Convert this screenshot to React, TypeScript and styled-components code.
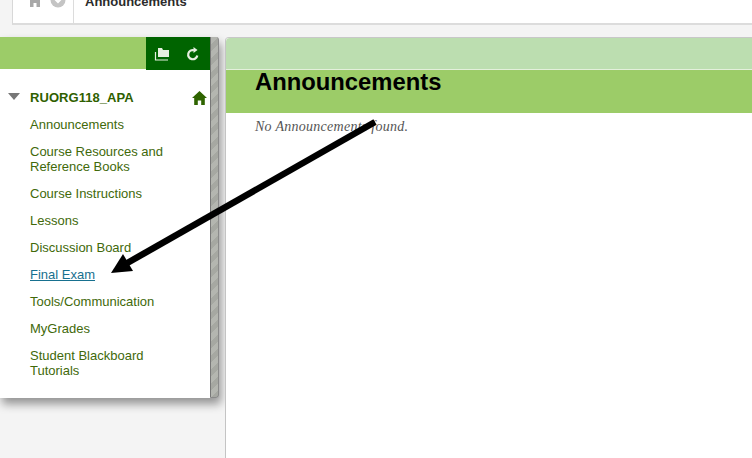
import React from "react";
import styled, { createGlobalStyle } from "styled-components";

const GlobalStyle = createGlobalStyle`
  html, body {
    margin: 0;
    padding: 0;
    background: #f4f4f4;
    overflow: hidden;
  }
`;

const Page = styled.div`
  position: relative;
  width: 752px;
  height: 458px;
  overflow: hidden;
  background: #f4f4f4;
  font-family: "Liberation Sans", Arial, sans-serif;
`;

const TopBar = styled.div`
  display: flex;
  align-items: flex-end;
  height: 23px;
  margin-left: 12px;
  background: #fff;
  border-left: 1px solid #d8d8d8;
  border-bottom: 2px solid #dcdcdc;
`;

const Crumbs = styled.div`
  display: flex;
  align-items: flex-start;
  gap: 7px;
  width: 61px;
  height: 100%;
  padding-left: 14px;
  box-sizing: border-box;
  border-right: 1px solid #dcdcdc;
  overflow: hidden;
`;

const CrumbIcon = styled.svg`
  flex: none;
  width: 16px;
  height: 16px;
  margin-top: -8px;
`;

const CrumbTitle = styled.div`
  align-self: flex-start;
  margin: -6px 0 0 11px;
  font-size: 13px;
  line-height: 15px;
  font-weight: bold;
  color: #2b2b2b;
`;

const Body = styled.div`
  display: flex;
  align-items: flex-start;
  gap: 6px;
  margin-top: 12px;
`;

const Sidebar = styled.aside`
  display: flex;
  width: 219px;
  height: 361px;
  box-shadow: 2px 6px 10px rgba(0, 0, 0, 0.4);
  border-radius: 0 3px 3px 0;
`;

const SidebarInner = styled.div`
  flex: 1;
  display: flex;
  flex-direction: column;
  background: #fff;
`;

const SidebarHead = styled.div`
  display: flex;
  justify-content: flex-end;
  height: 32px;
  background: #9ccc68;
`;

const HeadTools = styled.div`
  display: flex;
  align-items: center;
  justify-content: space-around;
  width: 65px;
  height: 33px;
  margin-right: -1px;
  padding: 0 3px 0 0;
  box-sizing: border-box;
  background: #006400;
`;

const Scrollbar = styled.div`
  width: 9px;
  border-radius: 0 3px 3px 0;
  box-sizing: border-box;
  border-left: 1px solid #777;
  border-right: 1px solid #8a8a8a;
  border-bottom: 1px solid #8a8a8a;
  background: repeating-linear-gradient(
    135deg,
    #b4b6b0 0 5px,
    #a6a8a2 5px 10px
  );
`;

const CourseRow = styled.div`
  display: flex;
  align-items: center;
  margin-top: 21px;
  padding: 0 3px 0 8px;
`;

const Caret = styled.span`
  width: 0;
  height: 0;
  border-left: 6px solid transparent;
  border-right: 6px solid transparent;
  border-top: 7px solid #777;
  margin-top: -2px;
`;

const CourseName = styled.span`
  flex: 1;
  margin-left: 10px;
  font-size: 13px;
  font-weight: bold;
  letter-spacing: 0.05px;
  line-height: 15px;
  color: #2f5f00;
`;

const NavList = styled.nav`
  display: flex;
  flex-direction: column;
  gap: 12px;
  margin-top: 12px;
  padding-left: 30px;
`;

const NavItem = styled.a<{ $active?: boolean }>`
  width: 145px;
  font-size: 13px;
  line-height: 15px;
  color: ${(p) => (p.$active ? "#17708f" : "#41690a")};
  text-decoration: ${(p) => (p.$active ? "underline" : "none")};
`;

const Main = styled.main`
  flex: 1;
  height: 430px;
  background: #fff;
  border-left: 1px solid #c4c4c4;
  border-top: 1px solid #c8c8c8;
  border-top-left-radius: 4px;
  box-sizing: border-box;
`;

const MainStrip = styled.div`
  height: 32px;
  box-sizing: border-box;
  background: #bcdeb0;
  border-bottom: 1px solid #e4f0dc;
  border-top-left-radius: 4px;
`;

const TitleBand = styled.div`
  height: 43px;
  padding-left: 29px;
  background: #9ccc68;
`;

const Title = styled.h1`
  margin: 0;
  font-size: 23.8px;
  line-height: 23px;
  font-weight: bold;
  color: #000;
`;

const EmptyNote = styled.p`
  margin: 6px 0 0 29px;
  font-family: "Liberation Serif", "Times New Roman", serif;
  font-style: italic;
  font-size: 14px;
  letter-spacing: 0.27px;
  line-height: 16px;
  color: #555;
`;

const Arrow = styled.svg`
  position: absolute;
  left: 0;
  top: 0;
  width: 752px;
  height: 458px;
  pointer-events: none;
`;

const items = [
  "Announcements",
  "Course Resources and Reference Books",
  "Course Instructions",
  "Lessons",
  "Discussion Board",
  "Final Exam",
  "Tools/Communication",
  "MyGrades",
  "Student Blackboard Tutorials",
];

const App: React.FC = () => {
  return (
    <Page>
      <GlobalStyle />
      <TopBar>
        <Crumbs>
          <CrumbIcon viewBox="0 0 16 16">
            <path d="M8 1 1 7.500h2V15h3.500v-4h3v4H13V7.500h2z" fill="#a8a8a8" />
          </CrumbIcon>
          <CrumbIcon viewBox="0 0 16 16">
            <circle cx="8" cy="8" r="7.500" fill="#c4c4c4" />
            <path d="M4.500 6.500 8 10l3.500-3.500" fill="none" stroke="#fff" strokeWidth="2" />
          </CrumbIcon>
        </Crumbs>
        <CrumbTitle>Announcements</CrumbTitle>
      </TopBar>
      <Body>
        <Sidebar>
          <SidebarInner>
            <SidebarHead>
              <HeadTools>
                <svg width="16" height="14" viewBox="0 0 16 14">
                  <path d="M4 1h4l1 2h6v7H4z" fill="#e6efe0" />
                  <path d="M1.500 5v8H14" fill="none" stroke="#e6efe0" strokeWidth="1.200" />
                </svg>
                <svg width="14" height="14" viewBox="0 0 14 14">
                  <path d="M11.300 8.500A4.600 4.600 0 1 1 8 3.200" fill="none" stroke="#e6efe0" strokeWidth="2.200" />
                  <path d="M7.500 0v6l4-3z" fill="#e6efe0" />
                </svg>
              </HeadTools>
            </SidebarHead>
            <CourseRow>
              <Caret />
              <CourseName>RUORG118_APA</CourseName>
              <svg width="15" height="14" viewBox="0 0 15 14">
                <path d="M7.500 0 0 7h2.200v7h3.600V9.500h3.400V14h3.600V7H15z" fill="#2f6400" />
              </svg>
            </CourseRow>
            <NavList>
              {items.map((label) => (
                <NavItem key={label} $active={label === "Final Exam"}>
                  {label}
                </NavItem>
              ))}
            </NavList>
          </SidebarInner>
          <Scrollbar />
        </Sidebar>
        <Main>
          <MainStrip />
          <TitleBand>
            <Title>Announcements</Title>
          </TitleBand>
          <EmptyNote>No Announcements found.</EmptyNote>
        </Main>
      </Body>
      <Arrow viewBox="0 0 752 458">
        <path d="M375 122 122 266" stroke="#000" strokeWidth="6.500" fill="none" />
        <path d="M111 273 123 254 133 271z" fill="#000" />
      </Arrow>
    </Page>
  );
};

export default App;
